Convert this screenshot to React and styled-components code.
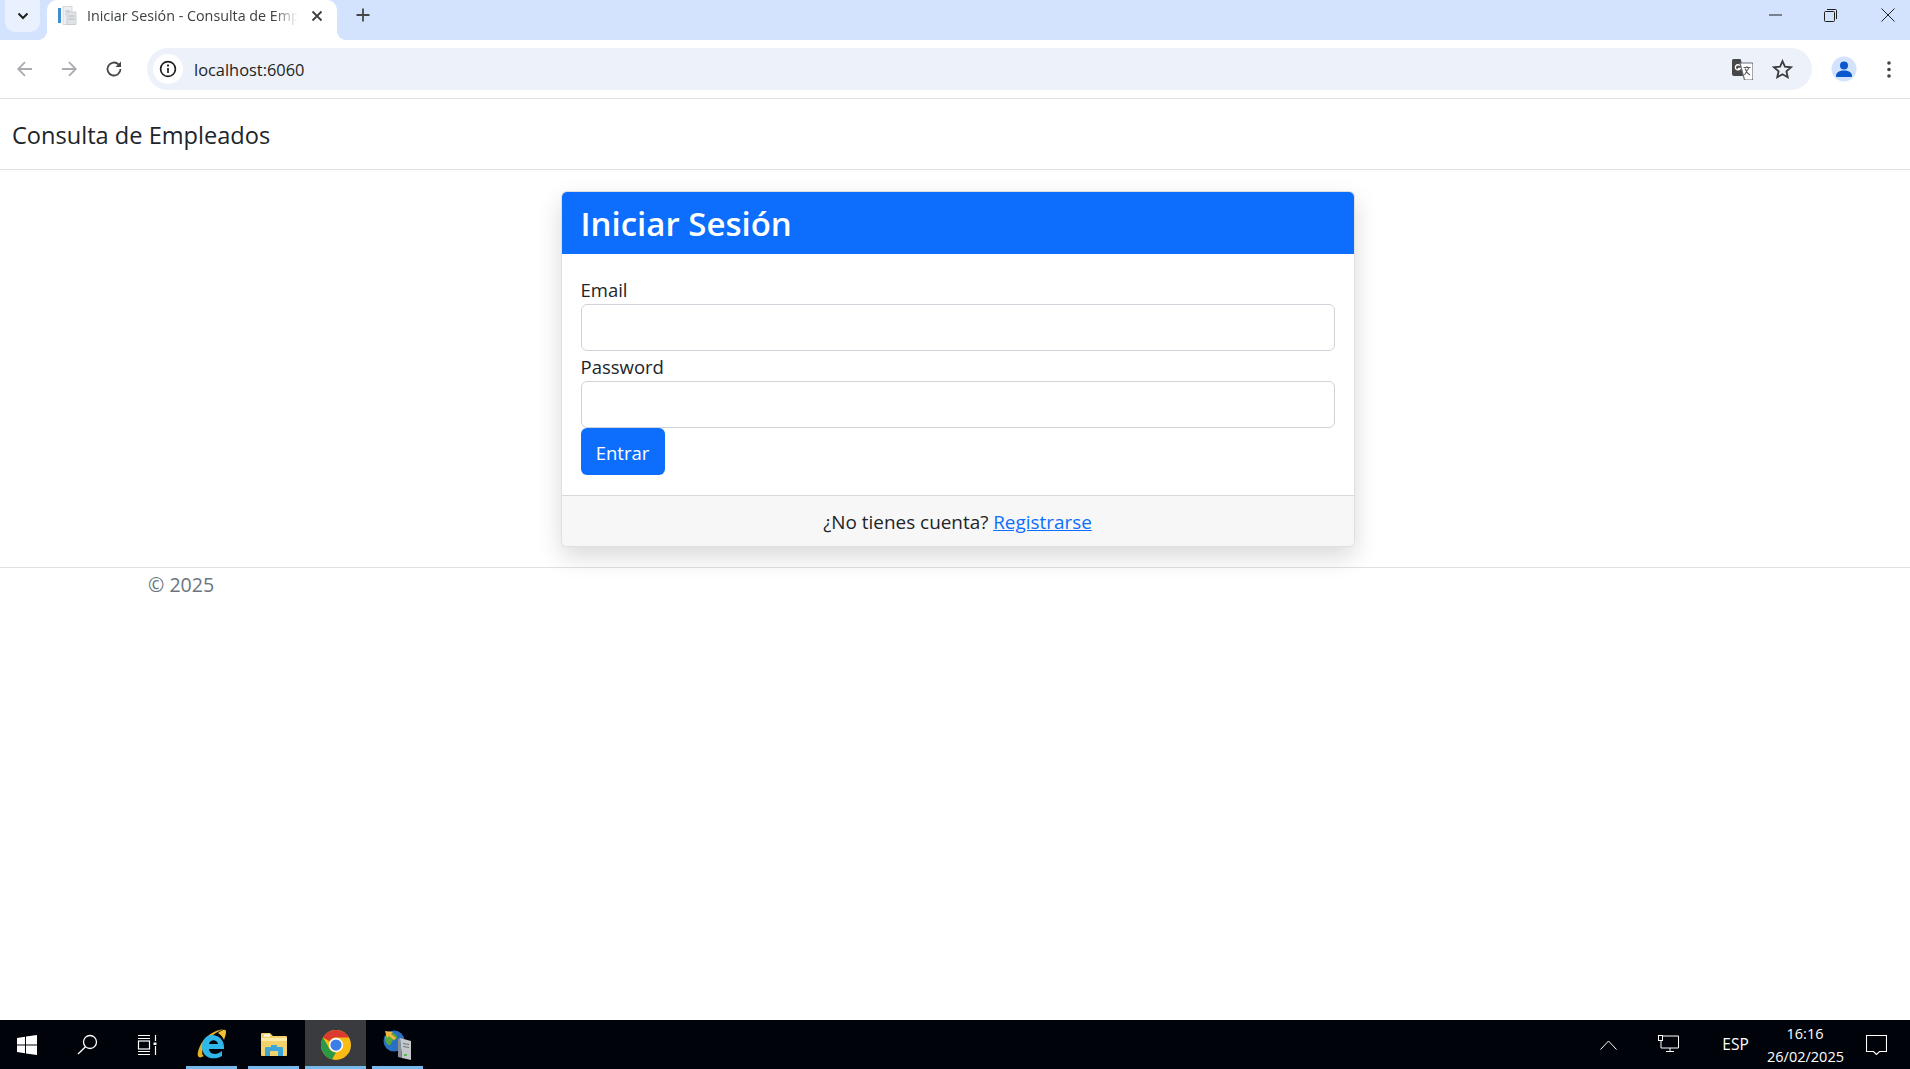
import React from "react";
import styled, { createGlobalStyle } from "styled-components";

const Global = createGlobalStyle`
  html, body { margin: 0; padding: 0; height: 100%; background: #fff; }
  #root { height: 100%; }
  * { box-sizing: border-box; }
  body { font-family: "Open Sans", "Noto Sans", "Liberation Sans", sans-serif; color: #212529; }
`;

const Page = styled.div`
  height: 1069px;
  display: flex;
  flex-direction: column;
  overflow: hidden;
`;

/* Browser chrome */
const TabStrip = styled.div`
  height: 40px;
  flex: none;
  background: #d3e3fd;
  display: flex;
  align-items: flex-start;
  padding-left: 5px;
`;
const TabSearch = styled.div`
  width: 35px;
  height: 32px;
  border-radius: 0 0 10px 10px;
  background: #e9f1fe;
  display: flex;
  align-items: center;
  justify-content: center;
  color: #1f1f1f;
`;
const Tab = styled.div`
  position: relative;
  width: 290px;
  height: 40px;
  margin-left: 7px;
  background: #fff;
  border-radius: 10px 10px 0 0;
  display: flex;
  align-items: center;
  padding: 0 10px 9px 10px;
  gap: 10px;
  &::before, &::after {
    content: "";
    position: absolute;
    bottom: 0;
    width: 10px;
    height: 10px;
  }
  &::before { left: -10px; background: radial-gradient(circle at 0 0, transparent 10px, #fff 10.5px); }
  &::after { right: -10px; background: radial-gradient(circle at 100% 0, transparent 10px, #fff 10.5px); }
`;
const TabTitle = styled.span`
  flex: 1;
  min-width: 0;
  margin-right: 3px;
  font-size: 14.3px;
  color: #3c4043;
  white-space: nowrap;
  overflow: hidden;
  mask-image: linear-gradient(90deg, #000 88%, transparent 100%);
`;
const TabClose = styled.svg`
  margin-right: 4px;
  flex: none;
`;
const TabAdd = styled.div`
  margin-left: 12px;
  width: 28px;
  height: 30px;
  display: flex;
  align-items: center;
  justify-content: center;
  color: #444746;
`;
const WindowControls = styled.div`
  margin-left: auto;
  display: flex;
  align-items: center;
  height: 30px;
`;
const WinButton = styled.div`
  width: ${(p) => p.$w}px;
  height: 30px;
  display: flex;
  align-items: center;
  justify-content: center;
`;

const Toolbar = styled.div`
  height: 59px;
  flex: none;
  background: #fff;
  border-bottom: 1px solid #e0e2e6;
  display: flex;
  align-items: center;
`;
const NavSlot = styled.div`
  width: ${(p) => p.$w}px;
  height: 42px;
  flex: none;
  display: flex;
  align-items: center;
  justify-content: center;
`;
const Omnibox = styled.div`
  flex: none;
  width: 1665px;
  height: 42px;
  border-radius: 21px;
  background: #ecf1fa;
  display: flex;
  align-items: center;
  padding: 0 7px 0 6px;
`;
const InfoChip = styled.div`
  width: 30px;
  height: 30px;
  border-radius: 50%;
  background: #fff;
  display: flex;
  align-items: center;
  justify-content: center;
`;
const Url = styled.span`
  margin-left: 11px;
  font-size: 16.4px;
  color: #1f1f1f;
  flex: 1;
`;
const OmniIcon = styled.div`
  width: ${(p) => p.$w}px;
  display: flex;
  justify-content: center;
  align-items: center;
`;

/* App content */
const Navbar = styled.header`
  height: 71px;
  flex: none;
  border-bottom: 1px solid #dee2e6;
  display: flex;
  align-items: center;
  padding: 2px 0 0 12px;
  font-size: 23.6px;
  color: #212529;
`;
const Main = styled.main`
  flex: none;
  padding-top: 21px;
  height: 397px;
  display: flex;
  justify-content: center;
`;
const Card = styled.section`
  margin-left: 5px;
  width: 794px;
  height: 356px;
  border: 1px solid rgba(0,0,0,.125);
  border-radius: 6px;
  box-shadow: 0 10px 24px rgba(0,0,0,.15);
  display: flex;
  flex-direction: column;
  overflow: hidden;
  background: #fff;
  position: relative;
  z-index: 1;
`;
const CardHeader = styled.div`
  height: 62px;
  flex: none;
  background: #0d6efd;
  color: #fff;
  display: flex;
  align-items: center;
  padding-left: 19px;
  font-size: 33px;
  font-weight: 600;
`;
const CardBody = styled.form`
  flex: 1;
  padding: 20px 19px;
  display: flex;
  flex-direction: column;
  align-items: flex-start;
`;
const Label = styled.label`
  font-size: 18.5px;
  line-height: 32px;
  height: 30px;
  display: block;
`;
const Input = styled.input`
  width: 100%;
  height: 47px;
  border: 1px solid #ced4da;
  border-radius: 6px;
  background: #fff;
  display: block;
`;
const Button = styled.button`
  width: 84px;
  height: 47px;
  border: 0;
  border-radius: 6px;
  background: #0d6efd;
  color: #fff;
  font: inherit;
  font-size: 18.5px;
  padding: 2px 0 0;
`;
const CardFooter = styled.div`
  height: 51px;
  flex: none;
  border-top: 1px solid #d9d9d9;
  background: #f7f7f7;
  display: flex;
  align-items: center;
  justify-content: center;
  padding-top: 2px;
  font-size: 18.9px;
  white-space: pre;
`;
const Link = styled.a`
  color: #0d6efd;
  text-decoration: underline;
`;
const Footer = styled.footer`
  flex: none;
  border-top: 1px solid #dee2e6;
  padding: 2px 0 0 148px;
  height: 50px;
  font-size: 19.6px;
  line-height: 30px;
  color: #6c757d;
`;
const Spacer = styled.div`
  flex: 1;
`;

/* Taskbar */
const Taskbar = styled.div`
  height: 49px;
  flex: none;
  background: #01030a;
  display: flex;
  align-items: stretch;
  color: #fff;
`;
const TaskCell = styled.div`
  width: ${(p) => p.$w}px;
  margin-left: ${(p) => p.$ml || 0}px;
  flex: none;
  display: flex;
  align-items: center;
  justify-content: center;
  background: ${(p) => (p.$active ? "#3a3b3e" : "transparent")};
  border-bottom: ${(p) => (p.$open ? "3px solid #76b9ed" : "0")};
  padding-top: ${(p) => (p.$open ? "3px" : "0")};
`;
const Tray = styled.div`
  margin-left: auto;
  display: flex;
  align-items: center;
`;
const TrayText = styled.div`
  width: ${(p) => p.$w}px;
  text-align: center;
  font-size: ${(p) => p.$size}px;
  line-height: 23px;
  color: #fff;
  white-space: nowrap;
`;

const Arrow = ({ dir, color }) => (
  <svg width="20" height="20" viewBox="0 0 20 20" fill="none" stroke={color} strokeWidth="1.8">
    {dir === "left" ? <path d="M17 10H3.5M10 3.2L3.2 10l6.8 6.8" /> : <path d="M3 10h13.5M10 3.2l6.8 6.8-6.8 6.8" />}
  </svg>
);

const FaviconIcon = () => (
  <svg width="20" height="20" viewBox="0 0 20 20">
    <rect x="1" y="2" width="3" height="15" fill="#3d8fce" />
    <rect x="6" y="0.5" width="9" height="18" fill="#eceff3" stroke="#c8ccd2" strokeWidth="0.7" />
    <rect x="10" y="6" width="9" height="12.5" fill="#dfe3e8" stroke="#bfc4ca" strokeWidth="0.7" />
    <path d="M8 5h5M8 8h1M11.5 10h6M11.5 13h6" stroke="#b5bac1" />
  </svg>
);

const TranslateIcon = () => (
  <svg width="21" height="21" viewBox="0 0 21 21">
    <path d="M1.500 0h7l6 17H2a2 2 0 0 1-2-2V1.500A1.500 1.500 0 0 1 1.500 0z" fill="#474747" />
    <path d="M8 4h11.500A1.500 1.500 0 0 1 21 5.500V19.500A1.500 1.500 0 0 1 19.500 21H12.500z" fill="#fff" stroke="#6b6e72" strokeWidth="1.200" />
    <path d="M7.800 6.500a2.600 2.600 0 1 0 .5 3H5.800" fill="none" stroke="#fff" strokeWidth="1.300" />
    <path d="M11.500 8.500h7M15 7v1.500M12.500 16l4.500-7.500M13 9.500c.8 2.600 2.500 5 5 6.500" fill="none" stroke="#5f6368" strokeWidth="1.100" />
  </svg>
);

const IEIcon = () => (
  <svg width="30" height="32" viewBox="0 0 30 32">
    <path d="M7 27C0 31-1 26 3 17 7 8 17 1 27 0c-8 3-15 8-19 15-3 5-4 11-1 12z" fill="#e3b325" />
    <path d="M15 6c7 0 12 5 12 12v2H12c0 5 7 7 13 2v5c-8 5-20 2-20-9 0-7 4-12 10-12zm-3 9h9c-1-5-8-5-9 0z" fill="#2fb7ea" />
    <path d="M21 4c4-3 8-5 8-1 0 2-1 5-2 8-1-3-3-5-6-7z" fill="#f2c230" />
  </svg>
);
const FolderIcon = () => (
  <svg width="28" height="26" viewBox="0 0 28 26">
    <path d="M1 2a1 1 0 0 1 1-1h8l3 3h13a1 1 0 0 1 1 1v18a1 1 0 0 1-1 1H2a1 1 0 0 1-1-1z" fill="#f3d26b" />
    <path d="M1 6h26v3H1z" fill="#fbe9a8" />
    <rect x="4" y="2.500" width="6" height="2" fill="#fff" />
    <path d="M5 24v-8a1 1 0 0 1 1-1h5v-2h6v2h5a1 1 0 0 1 1 1v8h-5v-5H10v5z" fill="#3ea5d8" />
  </svg>
);
const ChromeIcon = () => (
  <svg width="30" height="30" viewBox="0 0 48 48">
    <circle cx="24" cy="24" r="24" fill="#f9bc15" />
    <path d="M24 0a24 24 0 0 1 20.800 12H24a12 12 0 0 0-10.400 6L3.200 12A24 24 0 0 1 24 0z" fill="#db3a2f" />
    <path d="M3.200 12l10.400 18A12 12 0 0 0 24 36l-6.500 11.100A24 24 0 0 1 3.200 12z" fill="#2b9845" />
    <circle cx="24" cy="24" r="11.500" fill="#fff" />
    <circle cx="24" cy="24" r="9" fill="#3b7ee8" />
  </svg>
);
const ServerIcon = () => (
  <svg width="30" height="32" viewBox="0 0 30 32">
    <circle cx="11" cy="12" r="10.500" fill="#2a6fc0" />
    <path d="M5 5c3-2 6-1 8 1s1 5-2 5-2 4-4 5-5-3-5-6 1-4 3-5z" fill="#58a83a" />
    <path d="M2 2l8 1-2 2 5 4-2 2-5-4-2 2z" fill="#f4b740" />
    <path d="M17 9l11 3v19l-9-2z" fill="#c5c8cb" />
    <path d="M17 9l-2 1v18l4 1z" fill="#8c9094" />
    <path d="M20 14l6 1v1l-6-1zM20 17l6 1v1l-6-1z" fill="#6e7276" />
    <rect x="21" y="25" width="3" height="2" fill="#5db55a" />
  </svg>
);

export default function App() {
  return (
    <Page>
      <Global />
      <TabStrip>
        <TabSearch>
          <svg width="14" height="14" viewBox="0 0 14 14" fill="none" stroke="currentColor" strokeWidth="2"><path d="M2.500 4.500L7 9l4.500-4.500" /></svg>
        </TabSearch>
        <Tab>
          <FaviconIcon />
          <TabTitle>Iniciar Sesión - Consulta de Empleados</TabTitle>
          <TabClose width="12" height="12" viewBox="0 0 12 12" stroke="#3c4043" strokeWidth="1.800"><path d="M1.500 1.500l9 9M10.500 1.500l-9 9" /></TabClose>
        </Tab>
        <TabAdd>
          <svg width="14" height="14" viewBox="0 0 14 14" stroke="currentColor" strokeWidth="1.800"><path d="M7 .5v13M.5 7h13" /></svg>
        </TabAdd>
        <WindowControls>
          <WinButton $w={38}><svg width="13" height="2" viewBox="0 0 13 2" stroke="#1f1f1f"><path d="M0 1h13" /></svg></WinButton>
          <WinButton $w={72}>
            <svg width="13" height="13" viewBox="0 0 13 13" fill="none" stroke="#1f1f1f"><rect x=".5" y="2.500" width="10" height="10" rx="1" /><path d="M3 .5h8.500a1 1 0 0 1 1 1V10" /></svg>
          </WinButton>
          <WinButton $w={44}><svg width="14" height="14" viewBox="0 0 14 14" stroke="#1f1f1f" strokeWidth="1"><path d="M.5.5l13 13M13.500.5l-13 13" /></svg></WinButton>
        </WindowControls>
      </TabStrip>

      <Toolbar>
        <NavSlot $w={49}><Arrow dir="left" color="#aaacaf" /></NavSlot>
        <NavSlot $w={40}><Arrow dir="right" color="#aaacaf" /></NavSlot>
        <NavSlot $w={50}>
          <svg width="20" height="20" viewBox="0 0 20 20" fill="none" stroke="#474747" strokeWidth="1.800"><path d="M16.500 10a6.500 6.500 0 1 1-2-4.700L16.500 7" /><path d="M17 2.500V8h-5.500" fill="#474747" stroke="none" /></svg>
        </NavSlot>
        <NavSlot $w={8} />
        <Omnibox>
          <InfoChip>
            <svg width="18" height="18" viewBox="0 0 18 18" fill="none" stroke="#1f1f1f" strokeWidth="1.700"><circle cx="9" cy="9" r="7.400" /><path d="M9 8v5" /><path d="M9 4.500v2" strokeWidth="1.900" /></svg>
          </InfoChip>
          <Url>localhost:6060</Url>
          <OmniIcon $w={34}><TranslateIcon /></OmniIcon>
          <OmniIcon $w={46}>
            <svg width="21" height="21" viewBox="0 0 20 20" fill="none" stroke="#3c3c3c" strokeWidth="1.700"><path d="M10 2l2.300 5.300 5.700.6-4.300 3.800 1.300 5.700L10 14.500l-5 2.900 1.300-5.700L2 7.900l5.700-.6z" /></svg>
          </OmniIcon>
        </Omnibox>
        <NavSlot $w={64}>
          <svg width="26" height="26" viewBox="0 0 26 26">
            <circle cx="13" cy="13" r="12.500" fill="#d3e3fd" />
            <circle cx="13" cy="9.500" r="4" fill="#0b57d0" />
            <path d="M5 20c0-4 4-5.500 8-5.500s8 1.500 8 5.500c0 .6-.4 1-1 1H6c-.6 0-1-.4-1-1z" fill="#0b57d0" />
          </svg>
        </NavSlot>
        <NavSlot $w={26}>
          <svg width="4" height="17" viewBox="0 0 4 17" fill="#444"><circle cx="2" cy="2" r="1.800" /><circle cx="2" cy="8.500" r="1.800" /><circle cx="2" cy="15" r="1.800" /></svg>
        </NavSlot>
      </Toolbar>

      <Navbar>Consulta de Empleados</Navbar>
      <Main>
        <Card>
          <CardHeader>Iniciar Sesión</CardHeader>
          <CardBody>
            <Label>Email</Label>
            <Input />
            <Label>Password</Label>
            <Input />
            <Button type="button">Entrar</Button>
          </CardBody>
          <CardFooter>¿No tienes cuenta? <Link href="#">Registrarse</Link></CardFooter>
        </Card>
      </Main>
      <Footer>© 2025</Footer>
      <Spacer />

      <Taskbar>
        <TaskCell $w={54}>
          <svg width="20" height="20" viewBox="0 0 20 20" fill="#fff"><path d="M0 3l8-1.200V9.500H0zM9 1.600L20 0v9.500H9zM0 10.500h8v7.700L0 17zM9 10.500h11V20L9 18.400z" /></svg>
        </TaskCell>
        <TaskCell $w={61} $ml={3}>
          <svg width="21" height="21" viewBox="0 0 21 21" fill="none" stroke="#fff" strokeWidth="1.300"><circle cx="13" cy="8" r="6.500" /><path d="M8.500 12.800L1 20" /></svg>
        </TaskCell>
        <TaskCell $w={58}>
          <svg width="20" height="20" viewBox="0 0 20 20" fill="none" stroke="#fff" strokeWidth="1.200"><path d="M1 .5h12M1 19.500h12M1 3.500h12M1 16.500h12" /><rect x="1.500" y="6" width="11" height="8" /><path d="M18.500 0v6M18.500 11v9" /><rect x="16.500" y="7.500" width="3" height="2.500" fill="#fff" stroke="none" /></svg>
        </TaskCell>
        <TaskCell $w={51} $ml={10} $open><IEIcon /></TaskCell>
        <TaskCell $w={51} $ml={11} $open><FolderIcon /></TaskCell>
        <TaskCell $w={61} $ml={6} $open $active><ChromeIcon /></TaskCell>
        <TaskCell $w={51} $ml={6} $open><ServerIcon /></TaskCell>
        <Tray>
          <TaskCell $w={50}>
            <svg width="17" height="10" viewBox="0 0 17 10" fill="none" stroke="#fff" strokeWidth="1"><path d="M.5 9.500l8-8.500 8 8.500" /></svg>
          </TaskCell>
          <TaskCell $w={71}>
            <svg width="21" height="19" viewBox="0 0 21 19" fill="none" stroke="#fff" strokeWidth="1"><path d="M5 1h15.500v12H3V6" /><rect x=".5" y=".5" width="4" height="5" /><path d="M8 16.500h8M12 13v3.500" /></svg>
          </TaskCell>
          <TrayText $w={63} $size={15.5}>ESP</TrayText>
          <TrayText $w={76} $size={14.5}>16:16<br />26/02/2025</TrayText>
          <TaskCell $w={66}>
            <svg width="21" height="20" viewBox="0 0 21 20" fill="none" stroke="#fff" strokeWidth="1.100"><path d="M.5.500h20v16h-7l-3 3-3-3h-7z" /></svg>
          </TaskCell>
          <TaskCell $w={1} />
        </Tray>
      </Taskbar>
    </Page>
  );
}
